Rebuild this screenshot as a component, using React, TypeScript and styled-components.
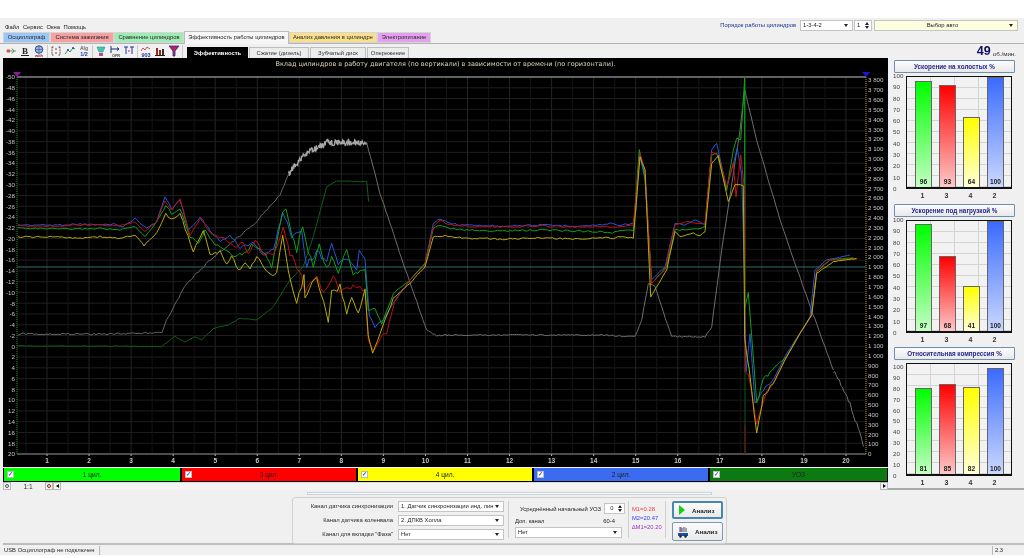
import React from "react";
import styled, { createGlobalStyle } from "styled-components";

const Global = createGlobalStyle`
  html, body { margin: 0; padding: 0; background: #fff; overflow: hidden; }
  #root { width: 1024px; height: 558px; }
  * { box-sizing: border-box; }
`;

const Page = styled.div`
  width: 1024px; height: 558px; display: flex; flex-direction: column;
  font-family: "Liberation Sans", Arial, sans-serif; font-size: 5.85px; color: #1e1e1e;
  background: #fff; overflow: hidden; filter: blur(0.3px);
`;
const WhiteTop = styled.div`height: 18px; flex: none;`;
const Chrome = styled.div`flex: none; height: 537px; background: #f0f0f0; display: flex; flex-direction: column; padding-left: 3px;`;
const MenuRow = styled.div`height: 13px; flex: none; display: flex; align-items: flex-start; padding: 2px 6px 0 2px;`;
const Menu = styled.div`display: flex; gap: 3.5px; padding-top: 3px; line-height: 8px; color: #222;`;
const Spacer = styled.div`flex: 1;`;
const OrderLabel = styled.span`color: #1c2f90; line-height: 10px; margin-right: 4px;`;
const Field = styled.div<{ $w: number; $bg?: string; $h?: number }>`
  width: ${p => p.$w}px; height: ${p => p.$h ?? 11}px; flex: none; background: ${p => p.$bg ?? "#fff"};
  border: 1px solid #c4c4c4; display: flex; align-items: center; padding: 0 2px; line-height: 9px;
  color: #1e1e1e; white-space: nowrap; overflow: hidden; font-size: 5.85px;
`;
const FieldText = styled.span<{ $center?: boolean }>`flex: 1; overflow: hidden; text-align: ${p => (p.$center ? "center" : "left")};`;
const Caret = styled.i`
  flex: none; width: 0; height: 0; border-left: 2.5px solid transparent; border-right: 2.5px solid transparent;
  border-top: 3px solid #222; margin: 0 2px 0 1px;
`;
const SpinBox = styled.span`flex: none; display: flex; flex-direction: column; gap: 1px; margin-left: 1px;`;
const SpinUp = styled.i`display: block; width: 0; height: 0; border-left: 2.5px solid transparent; border-right: 2.5px solid transparent; border-bottom: 3px solid #222;`;
const SpinDown = styled.i`display: block; width: 0; height: 0; border-left: 2.5px solid transparent; border-right: 2.5px solid transparent; border-top: 3px solid #222;`;
const Gap = styled.div<{ $w: number }>`width: ${p => p.$w}px; flex: none;`;

const TabRow = styled.div`height: 13px; flex: none; display: flex; align-items: flex-end; margin-left: -3px; padding-left: 3px; border-bottom: 1px solid #b4b4b4;`;
const Tab = styled.div<{ $w: number; $bg: string; $active?: boolean }>`
  width: ${p => p.$w}px; height: ${p => (p.$active ? 13 : 11)}px; flex: none; background: ${p => p.$bg};
  border: 1px solid ${p => (p.$active ? "#bbb" : "#d5d5d5")}; border-bottom: ${p => (p.$active ? "none" : "1px solid #d5d5d5")};
  text-align: center; line-height: ${p => (p.$active ? 10 : 9)}px; font-size: 5.85px; color: #26262c; white-space: nowrap;
  margin-bottom: ${p => (p.$active ? -1 : 0)}px; position: relative;
`;

const ToolRow = styled.div`height: 14px; flex: none; display: flex; align-items: center; padding-right: 8px;`;
const ToolGroup = styled.div`display: flex; align-items: center; gap: 2px; height: 13px; padding: 0 2px; border-right: 1px solid #c9c9c9;`;
const ToolIcon = styled.svg`width: 12px; height: 12px; flex: none; display: block;`;
const SubTabs = styled.div`display: flex; align-items: flex-end; margin-left: 4px; height: 14px;`;
const SubTab = styled.div<{ $w: number; $on?: boolean }>`
  width: ${p => p.$w}px; height: 11px; flex: none; margin-right: 1px; text-align: center; line-height: 10px; font-size: 5.85px;
  background: ${p => (p.$on ? "#000" : "#ececec")}; color: ${p => (p.$on ? "#fff" : "#333")};
  font-weight: ${p => (p.$on ? 700 : 400)}; border: 1px solid ${p => (p.$on ? "#000" : "#bdbdbd")}; border-bottom: none;
`;
const Rpm = styled.b`font-size: 12.5px; line-height: 13px; color: #10105e; margin-right: 2px;`;
const RpmUnit = styled.span`font-size: 6.2px; color: #333; margin-top: 4px;`;

const MainRow = styled.div`height: 432px; flex: none; display: flex; margin-left: 0; border-bottom: 2px solid #a9a9a9;`;
const LeftCol = styled.div`width: 885px; flex: none; display: flex; flex-direction: column;`;
const ChartPanel = styled.div`height: 409px; flex: none; background: #000; display: flex; flex-direction: column;`;
const ChartTitle = styled.div`
  height: 13px; flex: none; text-align: center; color: #e2d6b4; font-size: 6.5px; line-height: 13px;
  font-family: "DejaVu Sans", sans-serif; padding-left: 0; white-space: nowrap;
`;
const ChartSvg = styled.svg`display: block; width: 885px; height: 396px; flex: none;`;
const Legend = styled.div`height: 14px; flex: none; display: flex; background: #000; padding-bottom: 1px; margin-top: 1px;`;
const LegendItem = styled.div<{ $bg: string; $w: number }>`
  width: ${p => p.$w}px; flex: none; background: ${p => p.$bg}; border-right: 1px solid #000; border-left: 1px solid #000;
  display: flex; align-items: center; padding-left: 3px; color: #222; font-size: 6.6px;
`;
const Check = styled.span`
  width: 7px; height: 7px; flex: none; background: #fff; border: 1px solid #bbb; color: #2a62c8; font-size: 6px; line-height: 5px; text-align: center; font-weight: 700;
`;
const LegendText = styled.span`flex: 1; text-align: center; padding-right: 10px;`;
const ScrollRow = styled.div`height: 8px; flex: none; display: flex; align-items: stretch; background: #efefef;`;
const SmallBtn = styled.div`width: 8px; flex: none; border: 1px solid #b8b8b8; background: #f2f2f2; display: flex; align-items: center; justify-content: center;`;
const Ratio = styled.div`width: 34px; flex: none; text-align: center; font-size: 6.6px; line-height: 9px; color: #333;`;
const Track = styled.div`flex: 1; background: #f4f4f4; border-top: 1px solid #ddd;`;
const ArrowL = styled.i`width: 0; height: 0; border-top: 2.5px solid transparent; border-bottom: 2.5px solid transparent; border-right: 3px solid #111;`;
const ArrowR = styled.i`width: 0; height: 0; border-top: 2.5px solid transparent; border-bottom: 2.5px solid transparent; border-left: 3px solid #111;`;
const Dot = styled.i<{ $c: string }>`width: 4px; height: 4px; border-radius: 50%; border: 1px solid ${p => p.$c};`;

const Splitter = styled.div`width: 4px; flex: none; background: #eef2f8;`;
const RightCol = styled.div`width: 130px; flex: none; display: flex; flex-direction: column; padding-top: 2px; padding-left: 2px;`;
const ChartHead = styled.div`
  width: 121px; height: 13px; flex: none; border: 1px solid #6f8fae; border-radius: 1px; background: linear-gradient(#fdfdfd, #e8e8e8);
  text-align: center; color: #23238a; font-weight: 700; font-size: 6.3px; line-height: 11px; white-space: nowrap;
`;
const BarBlock = styled.div<{ $mb: number }>`
  display: grid; grid-template-columns: 12px 106px; margin-top: 3px; height: 125px; flex: none; margin-bottom: ${p => p.$mb}px; grid-template-rows: 1fr 12px;
`;
const YAxis = styled.div<{ $top: number }>`
  display: flex; flex-direction: column; justify-content: space-between; align-items: flex-start; margin: ${p => p.$top - 4}px 0 -4px -1px;
  font-size: 6.2px; line-height: 8px; color: #444;
`;
const Plot = styled.div<{ $top: number }>`
  border: 1px solid #111; border-width: 1px 1px 2px 1px; display: flex; align-items: flex-end; gap: 7px; padding: ${p => p.$top}px 7px 0 8px;
  background-color: #f2f2f2;
  background-image: linear-gradient(to right, transparent 23px, #d4d4d4 23px, #d4d4d4 24px, transparent 24px),
    linear-gradient(to right, transparent 47px, #d4d4d4 47px, #d4d4d4 48px, transparent 48px),
    linear-gradient(to right, transparent 71px, #d4d4d4 71px, #d4d4d4 72px, transparent 72px),
    repeating-linear-gradient(to top, #d4d4d4 0, #d4d4d4 1px, transparent 1px, transparent 11px);
`;
const BarTrack = styled.div`width: 17px; height: 100%; flex: none; display: flex; align-items: flex-end;`;
const Bar = styled.div<{ $a: string; $b: string }>`
  width: 17px; background: linear-gradient(${p => p.$a}, ${p => p.$b}); border: 1px solid #666; border-bottom: none;
  display: flex; align-items: flex-end; justify-content: center; font-size: 6.6px; font-weight: 700; color: #222; line-height: 9px; padding-bottom: 1px;
`;
const Cats = styled.div`
  grid-column: 2; display: flex; gap: 7px; padding: 2px 7px 0 8px; font-size: 7px; font-weight: 700; color: #333; line-height: 10px;
`;
const Cat = styled.span`width: 17px; flex: none; text-align: center;`;

const BottomArea = styled.div`height: 55px; flex: none; display: flex; flex-direction: column; align-items: flex-start; border-bottom: 2px solid #bcbcbc; padding-left: 289px;`;
const Grip = styled.div`
  width: 405px; height: 3px; margin: 2px 0 2px 15px; flex: none; border: 1px solid #c8d0dc; background: #fff;
  background-image: radial-gradient(circle, #6f92c8 0.5px, transparent 0.6px); background-size: 2px 2px;
`;
const AnalysisPanel = styled.div`
  width: 435px; height: 47px; flex: none; border: 1px solid #d0d0d0; border-radius: 3px; display: flex; align-items: stretch; padding: 3px 0 0 0;
`;
const ChannelCol = styled.div`
  width: 216px; flex: none; display: grid; grid-template-columns: 100px 106px; gap: 3px 5px; align-content: start;
  border-right: 1px solid #cfcfcf; margin-bottom: 5px; align-items: center;
`;
const FieldLabel = styled.span`text-align: right; color: #2a2a2a; line-height: 11px; white-space: nowrap;`;
const UozCol = styled.div`width: 120px; flex: none; border-right: 1px solid #cfcfcf; padding: 0 0 0 6px; margin-bottom: 5px; display: flex; flex-direction: column;`;
const UozRow = styled.div`display: flex; align-items: center; height: 12px; margin-top: 2px; padding-left: 5px; gap: 3px; white-space: nowrap;`;
const DopRow = styled.div`display: flex; justify-content: space-between; padding-right: 13px; margin-top: 2px; height: 12px; line-height: 10px;`;
const Stats = styled.div`width: 37px; flex: none; border-right: 1px solid #cfcfcf; padding: 4px 0 0 3px; margin-bottom: 5px; display: flex; flex-direction: column; gap: 1px;`;
const Stat = styled.span<{ $c: string }>`color: ${p => p.$c}; line-height: 8px; font-size: 5.85px; white-space: nowrap;`;
const ActionCol = styled.div`flex: 1; padding: 0 0 0 6px; display: flex; flex-direction: column; gap: 3px;`;
const ActionBtn = styled.div<{ $on?: boolean }>`
  width: 51px; height: ${p => (p.$on ? 18 : 19)}px; flex: none; border: ${p => (p.$on ? 2 : 1)}px solid ${p => (p.$on ? "#4a86b0" : "#7d98b0")}; border-radius: 2px;
  background: linear-gradient(#fbfbfb, #e9e9e9); display: flex; align-items: center; gap: 6px; padding-left: 4px; font-weight: 700; color: #222; font-size: 6.2px;
`;
const Status = styled.div`height: 10px; flex: none; display: flex; line-height: 9px; color: #2a2a2a; font-size: 5.85px; margin-left: -1px; padding-top: 1px;`;
const StatusMain = styled.div`width: 98px; flex: none; border-right: 1px solid #bbb; padding-left: 2px; white-space: nowrap;`;
const StatusFill = styled.div`flex: 1; border-left: 1px solid #e8e8e8;`;
const StatusVer = styled.div`width: 32px; flex: none; border-left: 1px solid #bbb; padding-left: 2px;`;

/* ---------- chart data ---------- */
type P = [number, number];
const z6 = (a: number[][]): P[] => a.map(([x, y]) => [100 + x / 3, 120 + y / 3]);
const z7 = (a: number[][]): P[] => a.map(([x, y]) => [600 + x / 3, 70 + y / 3]);
const noise = (i: number, seed: number) => {
  const s = Math.sin(i * 12.9898 + seed * 78.233) * 43758.5453;
  return (s - Math.floor(s)) * 2 - 1;
};
const ampAt = (x: number) => {
  if (x < 165) return 0.7;
  if (x < 235) return 1.2;
  if (x < 290) return 1.8;
  if (x < 366) return 3.2;
  if (x < 395) return 1;
  if (x < 440) return 0.4;
  if (x < 632) return 0.8;
  if (x < 742) return 0.5;
  if (x < 775) return 2;
  return 0.3;
};
function trace(pts: P[], seed: number, step = 2.5, amp: number | ((x: number) => number) = ampAt): string {
  const out: string[] = [];
  let k = 0;
  for (let i = 0; i < pts.length - 1; i++) {
    const [x0, y0] = pts[i];
    const [x1, y1] = pts[i + 1];
    const n = Math.max(1, Math.round(Math.abs(x1 - x0) / step));
    for (let j = 0; j < n; j++) {
      const t = j / n;
      const x = x0 + (x1 - x0) * t;
      const a = typeof amp === "number" ? amp : amp(x);
      out.push(`${x.toFixed(1)},${(y0 + (y1 - y0) * t + noise(k++, seed) * a).toFixed(1)}`);
    }
  }
  const l = pts[pts.length - 1];
  out.push(`${l[0]},${l[1]}`);
  return out.join(" ");
}
const start = (ys: number[]): P[] => [[18, ys[0]], [60, ys[1]], [80, ys[2]]];
const flat = (y: number): P[] => [[448, y - 2], [462, y], [500, y + 1], [540, y], [580, y + 1]];

const blue: P[] = [...start([225, 225, 224]), ...z6([[0, 315], [40, 312], [70, 320], [105, 295], [140, 325], [170, 305], [195, 230], [215, 265], [240, 240], [265, 330], [300, 295], [330, 330], [360, 365], [390, 345], [420, 385], [460, 365], [490, 405], [520, 390], [548, 275], [575, 345], [605, 330], [620, 435], [650, 395], [680, 420], [695, 365], [715, 440], [740, 410], [770, 460], [778, 390], [795, 420], [808, 590], [825, 620], [850, 600], [880, 550], [930, 480], [975, 430], [1000, 310], [1020, 295]]), ...flat(225), ...z7([[0, 465], [30, 460], [60, 465], [100, 460], [108, 420], [118, 250], [135, 330], [155, 630], [195, 590], [225, 460], [255, 465], [285, 450], [315, 465], [335, 240], [350, 220], [380, 355], [412, 235], [425, 315], [433, 600], [438, 900], [450, 795], [465, 1000], [490, 960], [525, 920], [560, 850], [600, 790], [630, 740], [645, 600], [680, 570], [750, 555]])];
const red: P[] = [...start([226, 226, 225]), ...z6([[0, 315], [60, 318], [105, 305], [135, 335], [170, 305], [195, 240], [215, 270], [240, 235], [270, 345], [303, 290], [330, 340], [380, 360], [405, 380], [430, 365], [445, 405], [465, 360], [490, 400], [520, 405], [550, 320], [570, 400], [605, 470], [615, 520], [650, 465], [670, 520], [700, 470], [720, 520], [760, 500], [795, 510], [805, 660], [820, 695], [850, 640], [860, 640], [885, 540], [930, 480], [975, 435], [1000, 320], [1020, 300]]), ...flat(226), ...z7([[0, 468], [30, 472], [60, 470], [100, 465], [120, 250], [135, 300], [155, 640], [195, 600], [225, 465], [260, 455], [315, 462], [335, 245], [355, 255], [380, 350], [400, 280], [408, 380], [422, 255], [433, 350], [435, 900], [445, 910], [470, 1060], [500, 960], [525, 930], [560, 860], [600, 790], [635, 735], [650, 600], [690, 570], [770, 568]])];
const green: P[] = [...start([228, 229, 229]), ...z6([[0, 325], [60, 330], [105, 320], [135, 350], [170, 305], [197, 258], [215, 280], [240, 265], [270, 350], [295, 370], [315, 330], [345, 375], [370, 385], [405, 410], [440, 395], [460, 370], [495, 405], [515, 440], [548, 275], [558, 268], [575, 345], [590, 390], [608, 320], [625, 395], [640, 440], [658, 375], [680, 450], [695, 405], [715, 455], [740, 380], [760, 465], [795, 440], [805, 570], [825, 565], [845, 610], [880, 520], [930, 480], [975, 430], [1000, 325], [1020, 315]]), ...flat(230), ...z7([[0, 485], [30, 490], [60, 482], [100, 482], [118, 240], [135, 320], [155, 640], [200, 590], [225, 480], [260, 480], [300, 475], [315, 470], [335, 255], [350, 250], [380, 360], [400, 240], [410, 205], [422, 210], [434, 20], [434, 720], [445, 665], [470, 1000], [490, 930], [525, 890], [560, 860], [600, 790], [635, 735], [650, 605], [690, 570], [760, 563]])];
const yellow: P[] = [...start([237, 237, 238]), ...z6([[0, 350], [60, 355], [105, 345], [132, 377], [170, 340], [197, 280], [215, 300], [240, 280], [280, 395], [310, 330], [330, 405], [360, 395], [380, 435], [395, 405], [415, 450], [435, 430], [450, 450], [470, 410], [510, 465], [530, 460], [548, 345], [565, 450], [590, 545], [612, 470], [615, 535], [650, 465], [685, 610], [695, 520], [720, 500], [740, 580], [755, 525], [775, 580], [795, 510], [805, 650], [818, 700], [840, 640], [880, 535], [930, 490], [975, 440], [1000, 350], [1020, 348]]), ...flat(238), ...z7([[0, 502], [40, 505], [60, 500], [100, 505], [120, 260], [135, 300], [152, 680], [200, 600], [225, 485], [240, 500], [280, 490], [300, 498], [315, 485], [335, 280], [355, 258], [385, 395], [405, 345], [430, 345], [434, 800], [448, 905], [470, 1090], [490, 980], [525, 930], [560, 860], [600, 790], [635, 735], [650, 610], [700, 575], [770, 565]])];

const gray1: P[] = [[18, 334], ...z6([[0, 642], [185, 638], [200, 600], [260, 490], [330, 420], [460, 315], [540, 225], [565, 165]])];
const gray2: P[] = z6([[565, 165], [580, 140], [620, 100], [680, 68], [800, 68]]);
const gray3: P[] = [...z6([[800, 68], [840, 220], [910, 430], [980, 630], [1010, 648]]), [445, 335], ...z7([[0, 795], [105, 800], [125, 750], [145, 640], [165, 650], [215, 800], [315, 800], [335, 770], [365, 540], [420, 180], [434, 60], [470, 210], [540, 450], [620, 680], [700, 900]])];
const gray4: P[] = z7([[700, 900], [750, 1000], [770, 1060], [790, 1130]]);
const uoz: P[] = [[18, 346], ...z6([[0, 678], [185, 680], [225, 650], [255, 665], [285, 650], [305, 660], [340, 625], [385, 615], [420, 595], [470, 600], [520, 560], [570, 480], [610, 440], [640, 350], [680, 200], [710, 183], [800, 185], [806, 245]])];

const PL = 17, PR = 866, PT = 77, PB = 454;
const leftTicks = Array.from({ length: 36 }, (_, i) => -50 + i * 2);
const rightTicks = Array.from({ length: 39 }, (_, i) => i * 100);
const xTicks = Array.from({ length: 20 }, (_, i) => i + 1);
const xAt = (i: number) => 47 + (i - 1) * 42.05;
const yL = (i: number) => PT + (i * (PB - PT)) / 35;
const fmt = (v: number) => (v >= 1000 ? `${Math.floor(v / 1000)} ${String(v % 1000).padStart(3, "0")}` : String(v));

const MainChart = () => (
  <ChartSvg viewBox="3 71 885 396">
    {leftTicks.map((_, i) => (
      <line key={i} x1={PL} x2={PR} y1={yL(i)} y2={yL(i)} stroke="#1e1e1e" strokeWidth={1} />
    ))}
    {xTicks.map(i => (
      <g key={i}>
        <line x1={xAt(i)} x2={xAt(i)} y1={PT} y2={PB} stroke="#242424" />
        <line x1={xAt(i) - 21} x2={xAt(i) - 21} y1={PT} y2={PB} stroke="#141414" />
        <line x1={xAt(i)} x2={xAt(i)} y1={PB} y2={PB + 2} stroke="#bbb" />
        <text x={xAt(i)} y={463} fontSize={6.5} fontWeight={700} fill="#c8c8c8" textAnchor="middle" fontFamily="Liberation Sans">{i}</text>
      </g>
    ))}
    <line x1={PL} x2={PR} y1={PT} y2={PT} stroke="#b4b4b4" />
    <line x1={PL} x2={PR} y1={PB} y2={PB} stroke="#8a8a8a" />
    <line x1={PL} x2={PL} y1={PT} y2={PB} stroke="#3f8f3f" strokeDasharray="1 1" />
    <line x1={PR} x2={PR} y1={PT} y2={PB} stroke="#b0a030" strokeDasharray="1 1" />
    <polygon points="13,72 21,72 17,77" fill="#8a1a9a" />
    <polygon points="862,72 870,72 866,77" fill="#1616e0" />
    {leftTicks.map((v, i) => (
      <text key={v} x={15} y={yL(i) + 2.3} fontSize={6.2} fill="#c4c4c4" textAnchor="end" fontFamily="Liberation Sans">{v}</text>
    ))}
    {rightTicks.map(v => (
      <text key={v} x={868} y={PB - (v * 374) / 3800 + 2.3} fontSize={6.2} fill="#c4c4c4" fontFamily="Liberation Sans">{fmt(v)}</text>
    ))}
    <line x1={PL} x2={PR} y1={267} y2={267} stroke="#2d6f66" />
    <line x1={745} x2={745} y1={80} y2={454} stroke="#0d5a12" strokeWidth={1} />
    <line x1={745} x2={745} y1={425} y2={454} stroke="#7a1010" strokeWidth={1} />
    <polyline points={trace(uoz, 5, 2.5, 0.35)} fill="none" stroke="#115f18" />
    <polyline points={trace(gray1, 6, 2, 0.9)} fill="none" stroke="#666" />
    <polyline points={trace(gray2, 7, 0.5, 3)} fill="none" stroke="#a8a8a8" strokeWidth={1.2} />
    <polyline points={trace(gray3, 8, 2, 0.7)} fill="none" stroke="#6e6e6e" />
    <polyline points={trace(gray4, 9, 1.5, 3)} fill="none" stroke="#6e6e6e" />
    <polyline points={trace(blue, 1)} fill="none" stroke="#2458d8" />
    <polyline points={trace(green, 3)} fill="none" stroke="#10a01c" />
    <polyline points={trace(red, 2)} fill="none" stroke="#c01010" />
    <polyline points={trace(yellow, 4)} fill="none" stroke="#b4ac10" />
  </ChartSvg>
);

/* ---------- bar charts ---------- */
const COLORS: [string, string, string][] = [
  ["1", "#00ff00", "#c4ffc4"],
  ["3", "#ff0000", "#ffc8c8"],
  ["4", "#ffff00", "#ffffd8"],
  ["2", "#3a6bff", "#ccd8ff"],
];
const AXIS = [100, 90, 80, 70, 60, 50, 40, 30, 20, 10, 0];

const BarChart = ({ title, values, top = 0, mb }: { title: string; values: number[]; top?: number; mb: number }) => (
  <>
    <ChartHead>{title}</ChartHead>
    <BarBlock $mb={mb}>
      <YAxis $top={top}>{AXIS.map(a => <span key={a}>{a}</span>)}</YAxis>
      <Plot $top={top}>
        {values.map((v, i) => (
          <BarTrack key={i}>
            <Bar $a={COLORS[i][1]} $b={COLORS[i][2]} style={{ height: `${v}%` }}>{v}</Bar>
          </BarTrack>
        ))}
      </Plot>
      <Cats>{COLORS.map(c => <Cat key={c[0]}>{c[0]}</Cat>)}</Cats>
    </BarBlock>
  </>
);

/* ---------- toolbar icons ---------- */
const Ico = ({ children }: { children: React.ReactNode }) => <ToolIcon viewBox="0 0 12 12">{children}</ToolIcon>;
const tiny = { fontFamily: "Liberation Sans", fontWeight: 700 } as const;
const toolIcons: React.ReactNode[][] = [
  [
    <Ico key="a"><path d="M1 6h10" stroke="#888" /><rect x="2" y="4.5" width="3" height="3" fill="#e05050" /><path d="M7 3.5l2 2.5-2 2.5" stroke="#40a040" fill="none" /></Ico>,
    <Ico key="b"><text x="6" y="9" fontSize="9" textAnchor="middle" fontFamily="Liberation Serif" fontWeight="700" fill="#222">B</text><path d="M2 10.5h8" stroke="#222" /></Ico>,
    <Ico key="c"><circle cx="6" cy="4.5" r="3.8" fill="#9db4e0" stroke="#304f98" /><path d="M2.5 4.5h7M6 1v7" stroke="#304f98" strokeWidth=".6" /><text x="6" y="11.5" fontSize="4" textAnchor="middle" fill="#a02020" style={tiny}>with</text></Ico>,
  ],
  [
    <Ico key="d"><path d="M2 2v8M2 2h2M2 10h2M10 2v8M10 2H8M10 10H8" stroke="#444" fill="none" strokeDasharray="1 .6" /><path d="M6 3v2M6 7v2" stroke="#c02020" /></Ico>,
    <Ico key="e"><path d="M1 9l3-4 2 2 3-4 2 1" stroke="#20a040" fill="none" /><circle cx="4" cy="5" r="1" fill="#2040c0" /><circle cx="9" cy="3" r="1" fill="#2040c0" /></Ico>,
    <Ico key="f"><text x="6" y="5" fontSize="5" textAnchor="middle" fill="#666" style={tiny}>Alg</text><text x="6" y="11" fontSize="5.4" textAnchor="middle" fill="#2040a0" style={tiny}>1/2</text></Ico>,
  ],
  [
    <Ico key="g"><path d="M2 2h8L8 7H4z" fill="#40c8b0" stroke="#208878" strokeWidth=".5" /><rect x="4" y="8" width="4" height="3" fill="#c04890" /></Ico>,
    <Ico key="h"><path d="M2 1v7M2 4h8M8 2.5L10 4 8 5.5" stroke="#103080" fill="none" /><text x="7" y="11.5" fontSize="3.8" textAnchor="middle" fill="#444" style={tiny}>OFR</text></Ico>,
    <Ico key="i"><path d="M1 2h4M3 2v7M7 2h4M9 2v7" stroke="#2030b0" /><path d="M5 6h2" stroke="#c02080" /></Ico>,
  ],
  [
    <Ico key="j"><path d="M1 6l2-3 2 2 2-3 3 2" stroke="#c03030" fill="none" strokeWidth=".8" /><text x="6" y="11.5" fontSize="5.5" textAnchor="middle" fill="#2040a0" style={tiny}>903</text></Ico>,
    <Ico key="k"><rect x="2" y="3" width="2" height="7" fill="#a02020" /><rect x="5" y="5" width="2" height="5" fill="#a02020" /><rect x="8" y="4" width="2" height="6" fill="#303030" /><path d="M1 10.5h10" stroke="#222" /></Ico>,
    <Ico key="l"><path d="M1 1h10L7 6v5H5V6z" fill="#c02050" stroke="#2030a0" strokeWidth=".8" /></Ico>,
  ],
];

const Select = ({ w, children }: { w: number; children: React.ReactNode }) => (
  <Field $w={w}><FieldText>{children}</FieldText><Caret /></Field>
);

export default function App() {
  return (
    <Page>
      <Global />
      <WhiteTop />
      <Chrome>
        <MenuRow>
          <Menu><span>Файл</span><span>Сервис</span><span>Окна</span><span>Помощь</span></Menu>
          <Spacer />
          <OrderLabel>Порядок работы цилиндров</OrderLabel>
          <Select w={53}>1-3-4-2</Select>
          <Gap $w={1} />
          <Field $w={18}><FieldText>1</FieldText><SpinBox><SpinUp /><SpinDown /></SpinBox></Field>
          <Gap $w={2} />
          <Field $w={144} $bg="#fdfde0"><FieldText $center>Выбор авто</FieldText><Caret /></Field>
        </MenuRow>
        <TabRow>
          <Tab $w={47} $bg="#9cc6f6">Осциллограф</Tab>
          <Tab $w={64} $bg="#f6a0a0">Система зажигания</Tab>
          <Tab $w={70} $bg="#9eecb4">Сравнение цилиндров</Tab>
          <Tab $w={105} $bg="#f6f6f6" $active>Эффективность работы цилиндров</Tab>
          <Tab $w={88} $bg="#fbe08c">Анализ давления в цилиндре</Tab>
          <Tab $w={54} $bg="#e4a0ee">Электропитание</Tab>
        </TabRow>
        <ToolRow>
          {toolIcons.map((g, i) => <ToolGroup key={i}>{g}</ToolGroup>)}
          <SubTabs>
            <SubTab $w={61} $on>Эффективность</SubTab>
            <SubTab $w={60}>Сжатие (дизель)</SubTab>
            <SubTab $w={56}>Зубчатый диск</SubTab>
            <SubTab $w={42}>Опережение</SubTab>
          </SubTabs>
          <Spacer />
          <Rpm>49</Rpm>
          <RpmUnit>об./мин.</RpmUnit>
        </ToolRow>
        <MainRow>
          <LeftCol>
            <ChartPanel>
              <ChartTitle>Вклад цилиндров в работу двигателя (по вертикали) в зависимости от времени (по горизонтали).</ChartTitle>
              <MainChart />
            </ChartPanel>
            <Legend>
              <LegendItem $w={178} $bg="#00ff00"><Check>✓</Check><LegendText>1 цил.</LegendText></LegendItem>
              <LegendItem $w={176} $bg="#ff0000"><Check>✓</Check><LegendText>3 цил.</LegendText></LegendItem>
              <LegendItem $w={176} $bg="#ffff00"><Check>✓</Check><LegendText>4 цил.</LegendText></LegendItem>
              <LegendItem $w={176} $bg="#3a6bf0"><Check>✓</Check><LegendText>2 цил.</LegendText></LegendItem>
              <LegendItem $w={179} $bg="#0c7a10"><Check>✓</Check><LegendText>УОЗ</LegendText></LegendItem>
            </Legend>
            <ScrollRow>
              <SmallBtn><Dot $c="#556" /></SmallBtn>
              <Ratio>1:1</Ratio>
              <SmallBtn><Dot $c="#a02020" /></SmallBtn>
              <SmallBtn><ArrowL /></SmallBtn>
              <Track />
              <SmallBtn><ArrowR /></SmallBtn>
            </ScrollRow>
          </LeftCol>
          <Splitter />
          <RightCol>
            <BarChart title="Ускорение на холостых %" values={[96, 93, 64, 100]} mb={3} />
            <BarChart title="Ускорение под нагрузкой %" values={[97, 68, 41, 100]} mb={2} />
            <BarChart title="Относительная компрессия %" values={[81, 85, 82, 100]} top={4} mb={0} />
          </RightCol>
        </MainRow>
        <BottomArea>
          <Grip />
          <AnalysisPanel>
            <ChannelCol>
              <FieldLabel>Канал датчика синхронизации</FieldLabel>
              <Select w={106}>1.  Датчик синхронизации инд. лин</Select>
              <FieldLabel>Канал датчика коленвала</FieldLabel>
              <Select w={106}>2.  ДПКВ Холла</Select>
              <FieldLabel>Канал для вкладки "Фаза"</FieldLabel>
              <Select w={106}>Нет</Select>
            </ChannelCol>
            <UozCol>
              <UozRow>Усреднённый начальный УОЗ<Field $w={21} $h={11}><FieldText>&nbsp;&nbsp;0</FieldText><SpinBox><SpinUp /><SpinDown /></SpinBox></Field></UozRow>
              <DopRow><span>Доп. канал</span><span>60-4</span></DopRow>
              <Select w={107}>Нет</Select>
            </UozCol>
            <Stats>
              <Stat $c="#f03a3a">M1=0.28</Stat>
              <Stat $c="#3a3af0">M2=20.47</Stat>
              <Stat $c="#a030c0">∆M1=20.20</Stat>
            </Stats>
            <ActionCol>
              <ActionBtn $on>
                <svg width="8" height="10" viewBox="0 0 8 10"><path d="M1 0l6 5-6 5z" fill="#12d012" /></svg>
                Анализ
              </ActionBtn>
              <ActionBtn>
                <svg width="12" height="12" viewBox="0 0 12 12"><path d="M3 1v5M5 2v4M7 1v5M9 2v4" stroke="#2050c0" /><path d="M4 1v5" stroke="#d03030" /><path d="M8 1v5" stroke="#e0a020" /><rect x="1" y="7" width="10" height="3" fill="#1a4fa8" /><circle cx="3.5" cy="10.5" r="1.2" fill="#222" /><circle cx="8.5" cy="10.5" r="1.2" fill="#222" /></svg>
                Анализ
              </ActionBtn>
            </ActionCol>
          </AnalysisPanel>
        </BottomArea>
        <Status>
          <StatusMain>USB Осциллограф не подключен</StatusMain>
          <StatusFill />
          <StatusVer>2.3</StatusVer>
        </Status>
      </Chrome>
    </Page>
  );
}
